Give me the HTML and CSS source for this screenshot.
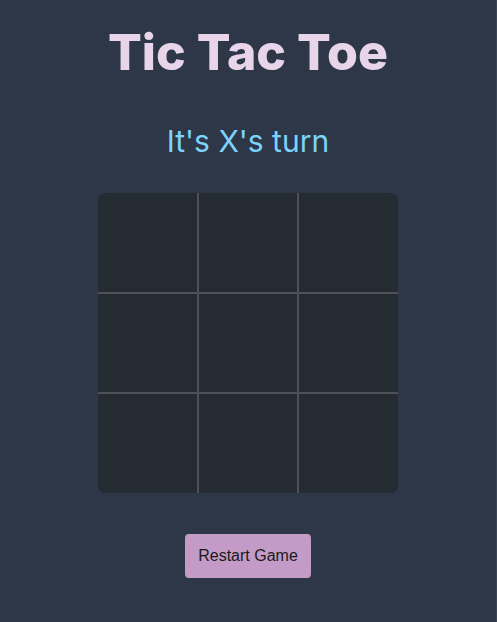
FILE: index.html
```html
<!DOCTYPE html>
<html lang="en">
<head>
<meta charset="utf-8">
<title>Tic Tac Toe</title>
<link rel="stylesheet" href="styles.css">
</head>
<body>
<main class="app">
  <h1 class="title">Tic Tac Toe</h1>
  <p class="status">It's X's turn</p>
  <div class="board">
    <div class="cell"></div>
    <div class="cell"></div>
    <div class="cell"></div>
    <div class="cell"></div>
    <div class="cell"></div>
    <div class="cell"></div>
    <div class="cell"></div>
    <div class="cell"></div>
    <div class="cell"></div>
  </div>
  <button class="restart" type="button">Restart Game</button>
</main>
</body>
</html>
```

FILE: styles.css
```css
html, body {
  margin: 0;
  padding: 0;
  background: #2d3748;
  height: 100%;
}

body {
  box-sizing: border-box;
  border-right: 1px solid #3a4454;
}

.app {
  display: flex;
  flex-direction: column;
  align-items: center;
  padding-top: 20px;
}

.title {
  margin: 0;
  font-family: Inter, "Open Sans", sans-serif;
  font-weight: 800;
  font-size: 50px;
  line-height: 64px;
  color: #e9d5e9;
}

.status {
  margin: 37px 0 0;
  font-family: Inter, "Open Sans", sans-serif;
  font-weight: 400;
  font-size: 30px;
  line-height: 40px;
  color: #7dd3fc;
}

.board {
  margin-top: 32px;
  display: grid;
  grid-template-columns: repeat(3, 100px);
  grid-template-rows: repeat(3, 100px);
  border-radius: 8px;
  overflow: hidden;
  background: #252b33;
}

.cell {
  box-sizing: border-box;
  background: #252b33;
  border: 1px solid #4e5159;
}

.cell:nth-child(-n+3) { border-top: none; }
.cell:nth-child(n+7) { border-bottom: none; }
.cell:nth-child(3n+1) { border-left: none; }
.cell:nth-child(3n) { border-right: none; }

.restart {
  margin-top: 41px;
  padding: 13px 13px;
  border: none;
  border-radius: 4px;
  background: #c49bc6;
  color: #1a1a1a;
  font-family: "Liberation Sans", Arial, sans-serif;
  font-size: 16px;
  line-height: 18px;
  cursor: pointer;
}
```
